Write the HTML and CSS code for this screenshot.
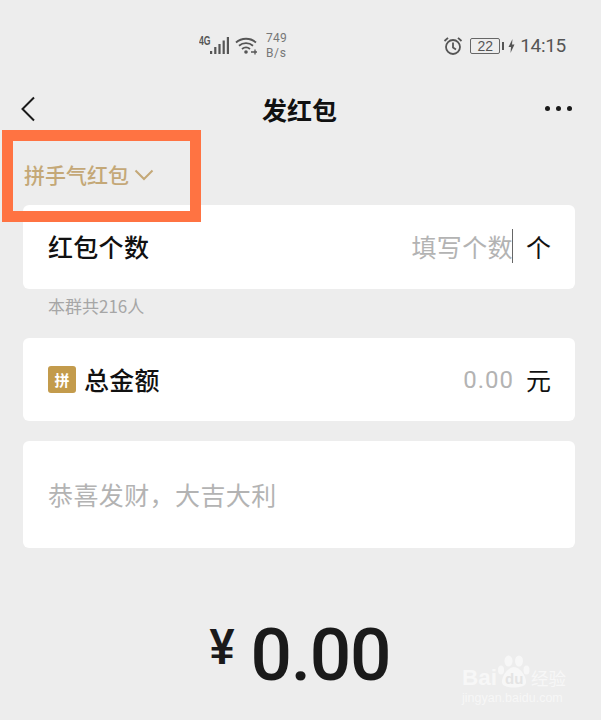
FILE: index.html
```html
<!DOCTYPE html>
<html lang="zh">
<head>
<meta charset="utf-8">
<title>发红包</title>
<link rel="stylesheet" href="styles.css">
</head>
<body>
<div class="page">
  <div class="status">
    <div class="status-mid">
      <span class="net">4G</span>
      <svg class="signal" width="20" height="20" viewBox="0 0 20 20"><g fill="#555"><rect x="0" y="15" width="2.2" height="3"/><rect x="4.200" y="11" width="2.2" height="7"/><rect x="8.400" y="8" width="2.2" height="10"/><rect x="12.600" y="4.500" width="2.2" height="13.500"/><rect x="16.800" y="1" width="2.2" height="17"/></g></svg>
      <svg class="wifi" width="23" height="20" viewBox="0 0 23 20"><g fill="none" stroke="#555" stroke-width="1.800"><path d="M1 6.500C6.500 1.500 15.500 1.500 21 6.500"/><path d="M4 9.800C8 6.300 14 6.300 18 9.800"/><path d="M7 13C9.500 11 12.500 11 15 13"/></g><circle cx="11" cy="16" r="1.800" fill="#555"/><path d="M16 16h6M20 13.500v5" stroke="#555" stroke-width="1.300"/></svg>
      <div class="speed"><span>749</span><span>B/s</span></div>
    </div>
    <div class="status-right">
      <svg class="alarm" width="20" height="20" viewBox="0 0 20 20"><g fill="none" stroke="#555" stroke-width="1.800"><circle cx="10" cy="11" r="7"/><path d="M10 6.500V11.500L13 13.500"/><path d="M1.500 5L5 1.800M18.500 5L15 1.800"/></g></svg>
      <div class="battery">22</div>
      <span class="battery-cap"></span>
      <svg class="bolt" width="7" height="14" viewBox="0 0 7 14"><path d="M4.500 0L0.500 8H3L2.500 14L6.500 5.500H4Z" fill="#555"/></svg>
      <span class="time">14:15</span>
    </div>
  </div>

  <header class="nav">
    <svg class="back" width="16" height="26" viewBox="0 0 16 26"><path d="M14 1.500L2.500 13L14 24.500" fill="none" stroke="#1a1a1a" stroke-width="2"/></svg>
    <h1 class="title">发红包</h1>
    <div class="more"><i></i><i></i><i></i></div>
  </header>

  <div class="type">
    <span>拼手气红包</span>
    <svg width="20" height="12" viewBox="0 0 20 12"><path d="M1.500 1.500L10 10L18.500 1.500" fill="none" stroke="#c4a877" stroke-width="2"/></svg>
  </div>

  <section class="card row count-card">
    <span class="label">红包个数</span>
    <div class="value">
      <span class="placeholder">填写个数</span><span class="caret"></span>
      <span class="unit">个</span>
    </div>
  </section>
  <p class="hint">本群共216人</p>

  <section class="card row amount-card">
    <div class="amount-label">
      <span class="badge">拼</span>
      <span class="label">总金额</span>
    </div>
    <div class="value">
      <span class="placeholder num">0.00</span>
      <span class="unit yuan">元</span>
    </div>
  </section>

  <section class="card wish">恭喜发财，大吉大利</section>

  <div class="total"><span class="yen">¥</span><span class="sum">0.00</span></div>

  <div class="highlight"></div>
  <div class="watermark">
    <div class="wm-top">
      <span class="wm-bai">Bai</span>
      <span class="wm-paw">
        <svg width="34" height="33" viewBox="0 0 34 33"><g fill="#f7f7f7"><ellipse cx="4" cy="15" rx="3" ry="4.500"/><ellipse cx="11.500" cy="6" rx="4" ry="5.500"/><ellipse cx="22" cy="6" rx="4" ry="5.500"/><ellipse cx="29.500" cy="15" rx="3" ry="4.500"/><path d="M17 12C11 12 4 22 5 28C6 34 28 34 29 28C30 22 23 12 17 12Z"/></g></svg>
        <span class="wm-du">du</span>
      </span>
      <span class="wm-jy">经验</span>
    </div>
    <div class="wm-url">jingyan.baidu.com</div>
  </div>
</div>
</body>
</html>
```

FILE: styles.css
```css
* { box-sizing: border-box; }
html, body { margin: 0; padding: 0; }
body { background: #ededed; font-family: "Noto Sans CJK SC", "Liberation Sans", sans-serif; }
.page { position: relative; width: 601px; height: 720px; overflow: hidden; padding: 0 26px 0 23px; }

.status { height: 89px; display: flex; align-items: flex-start; justify-content: flex-end; position: relative; padding: 31px 9px 0 0; }
.status-mid { position: absolute; left: 176px; top: 31px; display: flex; align-items: center; height: 30px; }
.net { width: 11px; font: bold 12px/10px "Liberation Sans", sans-serif; color: #555; align-self: flex-start; margin-top: 5px; transform: scaleX(.72); transform-origin: left; }
.signal { margin-right: 5px; }
.wifi { margin-right: 8px; }
.speed { display: flex; flex-direction: column; font: 12px/15px Roboto, sans-serif; color: #777; letter-spacing: .3px; }
.speed span:last-child { letter-spacing: .6px; }
.status-right { display: flex; align-items: center; height: 30px; }
.alarm { margin-right: 7px; }
.battery { width: 30px; height: 16px; border: 1px solid #666; border-radius: 2px; font: 14px/14px "Liberation Sans", sans-serif; color: #555; text-align: center; }
.battery-cap { width: 2px; height: 8px; background: #555; margin-left: 2px; }
.bolt { margin: 0 5px 0 4px; }
.time { font: 19px/30px Roboto, sans-serif; color: #555; letter-spacing: -.3px; }

.nav { height: 41px; display: flex; align-items: center; justify-content: space-between; position: relative; margin-right: -1px; }
.title { position: absolute; left: 0; right: 0; margin: 0; text-align: center; font-size: 25px; font-weight: 700; line-height: 41px; color: #111; }
.back { margin: 0 0 2px -3px; }
.more { display: flex; gap: 6px; margin: 0 4px 2px 0; }
.more i { width: 5px; height: 5px; border-radius: 50%; background: #1a1a1a; display: block; }

.type { height: 75px; display: flex; align-items: center; gap: 5px; margin-left: 1px; padding-top: 13px; color: #c4a877; font-size: 21px; font-weight: 500; }
.type svg { margin-top: 1px; }

.card { background: #fff; border-radius: 6px; }
.row { display: flex; align-items: center; justify-content: space-between; padding: 0 24px 2px 25px; height: 84px; }
.count-card { margin-bottom: 7px; }
.label { font-size: 25px; font-weight: 500; color: #111; letter-spacing: .3px; }
.value { display: flex; align-items: center; }
.placeholder { font-size: 25px; color: #b3b3b3; letter-spacing: .4px; }
.caret { width: 1px; height: 34px; background: #666; margin-left: -1px; }
.unit { font-size: 25px; color: #111; margin-left: 13px; }
.hint { margin: 0; height: 42px; padding: 0 0 0 25px; font-size: 17px; line-height: 20px; color: #a6a6a6; }
.amount-label { display: flex; align-items: center; gap: 8px; }
.badge { width: 28px; height: 27px; margin-top: 2px; border-radius: 3px; background: #c39b4c; color: #fff; font-size: 15px; font-weight: 700; line-height: 27px; text-align: center; }
.num { font-family: Roboto, sans-serif; letter-spacing: 1px; font-size: 24px; margin-top: 2px; }
.yuan { margin-left: 12px; }
.amount-card { height: 83px; margin-bottom: 20px; }
.wish { height: 107px; padding: 0 25px 2px; display: flex; align-items: center; font-size: 25px; color: #b3b3b3; letter-spacing: .4px; }

.total { display: flex; align-items: center; justify-content: center; gap: 15px; margin-top: 62px; height: 90px; color: #1a1a1a; }
.yen { font: bold 50px/74px "Liberation Sans", sans-serif; margin-bottom: 16px; transform: scaleX(.9); }
.sum { font: 500 73px/90px Roboto, sans-serif; letter-spacing: -1.200px; }

.highlight { position: absolute; left: 2px; top: 130px; width: 199px; height: 92px; border: 11px solid #ff7342; }

.watermark { position: absolute; left: 462px; top: 655px; width: 110px; color: #f7f7f7; }
.wm-top { display: flex; align-items: flex-end; height: 33px; font-family: "Liberation Sans", sans-serif; }
.wm-bai { font-size: 22.500px; font-weight: 700; line-height: 20px; }
.wm-paw { position: relative; width: 34px; height: 33px; flex: none; }
.wm-paw svg { display: block; }
.wm-du { position: absolute; left: 8px; bottom: 1px; font-size: 15px; line-height: 17px; font-weight: 700; color: #e4e4e4; }
.wm-jy { font-size: 17.500px; line-height: 20px; font-family: "Noto Sans CJK SC", sans-serif; white-space: nowrap; }
.wm-url { font: 12.500px/14px "Liberation Sans", sans-serif; margin-top: 3px; white-space: nowrap; }
```
